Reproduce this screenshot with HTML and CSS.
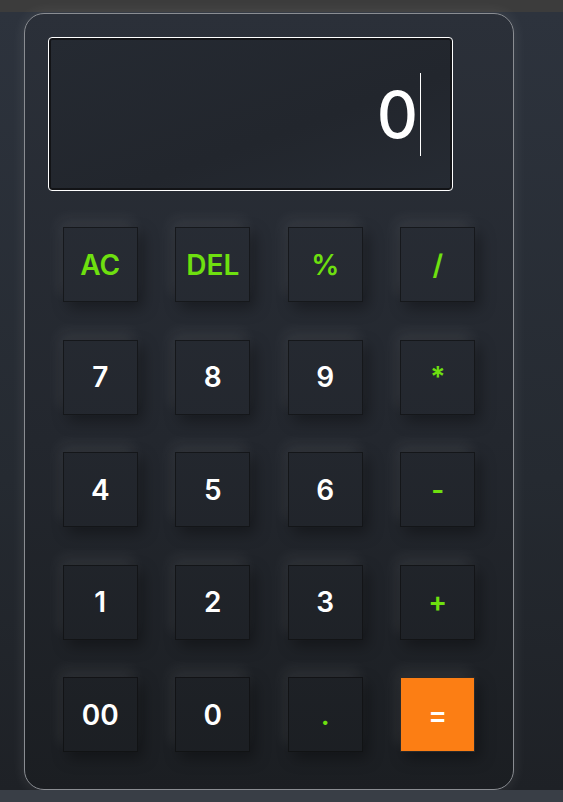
FILE: index.html
```html
<!DOCTYPE html>
<html>
<head>
<meta charset="utf-8">
<link rel="stylesheet" href="styles.css">
</head>
<body>
<div class="topbar"></div>
<main class="stage">
  <div class="calc">
    <div class="display"><span class="value">0</span><span class="caret"></span></div>
    <div class="keys">
      <button class="key op">AC</button>
      <button class="key op">DEL</button>
      <button class="key op">%</button>
      <button class="key op">/</button>
      <button class="key">7</button>
      <button class="key">8</button>
      <button class="key">9</button>
      <button class="key op">*</button>
      <button class="key">4</button>
      <button class="key">5</button>
      <button class="key">6</button>
      <button class="key op">-</button>
      <button class="key">1</button>
      <button class="key">2</button>
      <button class="key">3</button>
      <button class="key op">+</button>
      <button class="key">00</button>
      <button class="key">0</button>
      <button class="key op">.</button>
      <button class="key equal">=</button>
    </div>
  </div>
</main>
<div class="bottombar"></div>
</body>
</html>
```
FILE: styles.css
```css
* { box-sizing: border-box; }
html, body { margin: 0; padding: 0; }
body {
  width: 563px;
  height: 802px;
  overflow: hidden;
  background: #393e46;
  font-family: "Inter", "Noto Sans", sans-serif;
}
.topbar { height: 12px; background: #3c3c3c; }
.bottombar { height: 12px; background: #393e46; }
.stage {
  height: 778px;
  padding: 1px 0 0 24px;
  background: linear-gradient(180deg, #2d333d 0%, #252a31 60%, #1e2126 100%);
}
.calc {
  width: 490px;
  height: 777px;
  border: 1px solid #8a8d92;
  border-radius: 20px;
  padding: 23px;
  background: linear-gradient(180deg, #2b3039 0%, #23272e 55%, #1b1e22 100%);
  box-shadow: 0 0 14px rgba(255,255,255,0.1);
}
.display {
  width: 405px;
  height: 154px;
  border: 1px solid #ffffff;
  border-radius: 4px;
  box-shadow: inset 0 0 0 2px #121316;
  background: linear-gradient(160deg, #252a32 0%, #22262d 60%, #262b33 100%);
  display: flex;
  align-items: center;
  justify-content: flex-end;
  padding-right: 31px;
}
.value {
  color: #fff;
  font-size: 64px;
  font-weight: 500;
  line-height: 1;
  margin-top: 2px;
}
.caret {
  width: 1px;
  height: 83px;
  background: #fff;
  margin-left: 2px;
}
.keys {
  margin-top: 36px;
  display: grid;
  grid-template-columns: repeat(4, 75px);
  grid-auto-rows: 75px;
  gap: 37.5px;
  justify-content: center;
}
.key {
  border: 1px solid rgba(10,10,10,0.55);
  background: transparent;
  color: #fff;
  font-family: inherit;
  font-size: 28px;
  font-weight: 600;
  padding: 0;
  box-shadow: -4px -8px 14px rgba(255,255,255,0.07), 5px 6px 14px rgba(0,0,0,0.35);
}
.key.op { color: #6ee00f; }
.key.equal {
  background: #fc7e14;
  border-color: #2a2a2a;
}
```
